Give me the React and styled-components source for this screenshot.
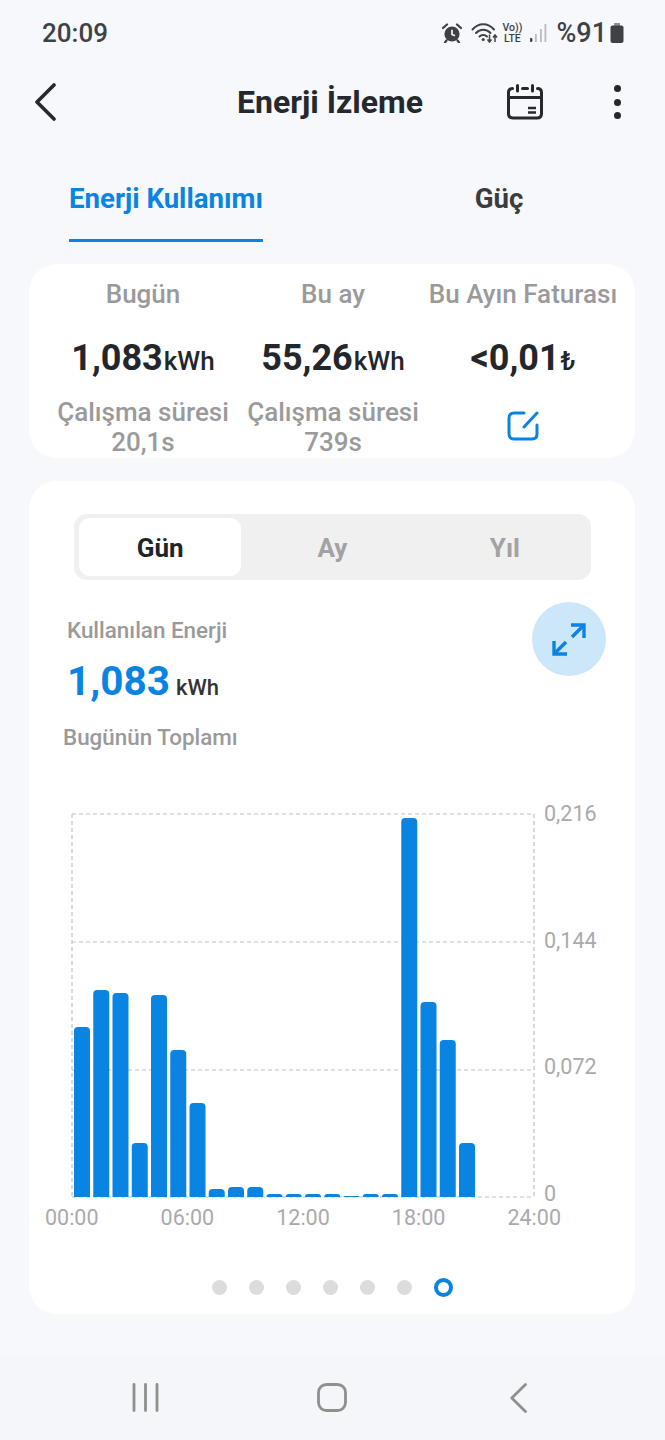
import React from 'react';
import styled, { createGlobalStyle } from 'styled-components';

const BLUE = '#0984e3';
const GREY = '#9a9a9c';

const GlobalStyle = createGlobalStyle`
    * {
        box-sizing: border-box;
    }
    html,
    body {
        margin: 0;
        padding: 0;
        background: #f6f8fc;
    }
    body {
        font-family: Roboto, 'Noto Sans', sans-serif;
    }
`;

// bar tops in page pixels, one per hour, baseline at 1197
const BAR_TOPS = [
    1027, 990, 993, 1143, 995, 1050, 1103, 1189, 1187, 1187, 1194, 1194, 1194, 1194, 1196, 1194, 1194, 818, 1002,
    1040, 1143,
];
const PLOT_TOP = 814;
const PLOT_BOTTOM = 1197;

function Chart() {
    const height = PLOT_BOTTOM - PLOT_TOP;
    return (
        <svg width="464" height={height + 2} viewBox={`-1 -1 464 ${height + 2}`}>
            <g stroke="#c2c2c4" strokeWidth="1.2" strokeDasharray="4 3" fill="none">
                <path d={`M0 0V${height}`} />
                <path d={`M462 0V${height}`} />
                <path d="M0 0H462" />
                <path d="M0 128H462" />
                <path d="M0 256H462" />
                <path d={`M0 ${height}H462`} />
            </g>
            <g fill={BLUE}>
                {BAR_TOPS.map((top, i) => {
                    const x = 2 + i * 19.25;
                    const y = top - PLOT_TOP;
                    const r = Math.min(4, height - y);
                    return (
                        <path
                            key={i}
                            d={`M${x} ${height}V${y + r}Q${x} ${y} ${x + r} ${y}H${x + 16 - r}Q${x + 16} ${y} ${x + 16} ${y + r}V${height}Z`}
                        />
                    );
                })}
            </g>
        </svg>
    );
}

export default function App() {
    return (
        <Page>
            <GlobalStyle />
            <StatusBar>
                <Clock>20:09</Clock>
                <StatusIcons>
                    <svg width="20" height="20" viewBox="0 0 20 20">
                        <circle cx="10" cy="11" r="7.6" fill="#3f4245" />
                        <path d="M10 6.8V11.4L13 12.8" stroke="#f6f8fc" strokeWidth="1.7" fill="none" />
                        <path d="M1 5L5 1.5M19 5L15 1.5" stroke="#3f4245" strokeWidth="2.2" strokeLinecap="round" />
                        <path d="M4.5 17.5L3 19.5M15.5 17.5L17 19.5" stroke="#3f4245" strokeWidth="2.2" strokeLinecap="round" />
                    </svg>
                    <WifiIcon width="27" height="21" viewBox="0 0 27 21">
                        <g fill="none" stroke="#3f4245" strokeWidth="2" strokeLinecap="round">
                            <path d="M1.5 7.5C7.5 .5 17 .5 23 7.5" />
                            <path d="M5 11C9 6.5 15.5 6.5 19.5 11" />
                            <path d="M8.5 14.5C10.5 12.5 14 12.5 16 14.5" />
                        </g>
                        <circle cx="12.2" cy="17.5" r="1.6" fill="#3f4245" />
                        <path d="M18.5 12.5V19.5M16.5 17.5L18.5 20L20.5 17.5M24 20V13M22 15.5L24 13L26 15.5" fill="none" stroke="#3f4245" strokeWidth="1.5" />
                    </WifiIcon>
                    <Volte>
                        <span>Vo))</span>
                        <span>LTE</span>
                    </Volte>
                    <svg width="18" height="20" viewBox="0 0 18 20">
                        <rect x="1" y="15" width="2.4" height="4" rx="1" fill="#3f4245" />
                        <rect x="6" y="11" width="1.8" height="8" fill="#b9bbbe" />
                        <rect x="11" y="6" width="1.8" height="13" fill="#b9bbbe" />
                        <rect x="15.5" y="1" width="1.8" height="18" fill="#b9bbbe" />
                    </svg>
                    <Battery>%91</Battery>
                    <svg width="14" height="20" viewBox="0 0 14 20">
                        <rect x="4" y="0" width="6" height="3" fill="#8d8f92" />
                        <rect x="0.5" y="2.5" width="13" height="17.5" rx="2" fill="#3f4245" />
                    </svg>
                </StatusIcons>
            </StatusBar>

            <Header>
                <svg width="24" height="38" viewBox="0 0 24 38">
                    <path d="M21 2L4 19L21 36" fill="none" stroke="#25292d" strokeWidth="3.6" strokeLinecap="round" strokeLinejoin="round" />
                </svg>
                <Title>Enerji İzleme</Title>
                <HeaderActions>
                    <svg width="36" height="36" viewBox="0 0 36 36">
                        <g fill="none" stroke="#25292d" strokeWidth="3" strokeLinecap="round">
                            <path d="M5.5 4.5C3 4.5 1.5 6 1.5 8.5V29.5C1.5 32.5 3 34 6 34H30C33 34 34.5 32.5 34.5 29.5V8.5C34.5 6 33 4.5 30.5 4.5" />
                            <path d="M1.5 13.5H34.5" />
                            <path d="M10.5 1.5V7M25.5 1.5V7" />
                            <path d="M15.5 4.5H20.5" />
                            <path d="M21 24H29M21 28.5H29" strokeWidth="2.6" strokeLinecap="butt" />
                        </g>
                    </svg>
                    <Kebab>
                        <i />
                        <i />
                        <i />
                    </Kebab>
                </HeaderActions>
            </Header>

            <Tabs>
                <Tab $active>Enerji Kullanımı</Tab>
                <Tab>Güç</Tab>
            </Tabs>

            <SummaryCard>
                <SummaryCol>
                    <SummaryLabel>Bugün</SummaryLabel>
                    <SummaryValue>
                        1,083<small>kWh</small>
                    </SummaryValue>
                    <SummaryNote>
                        Çalışma süresi
                        <br />
                        20,1s
                    </SummaryNote>
                </SummaryCol>
                <SummaryCol>
                    <SummaryLabel>Bu ay</SummaryLabel>
                    <SummaryValue>
                        55,26<small>kWh</small>
                    </SummaryValue>
                    <SummaryNote>
                        Çalışma süresi
                        <br />
                        739s
                    </SummaryNote>
                </SummaryCol>
                <SummaryCol>
                    <SummaryLabel>Bu Ayın Faturası</SummaryLabel>
                    <SummaryValue>
                        &lt;0,01<small>₺</small>
                    </SummaryValue>
                    <EditIcon width="32" height="30" viewBox="0 0 32 30">
                        <path
                            d="M17 2H7C3.7 2 2 3.7 2 7V23C2 26.3 3.7 28 7 28H25C28.3 28 30 26.3 30 23V14"
                            fill="none"
                            stroke={BLUE}
                            strokeWidth="3"
                            strokeLinecap="round"
                        />
                        <path d="M30 2L17 16" fill="none" stroke={BLUE} strokeWidth="3" strokeLinecap="round" />
                    </EditIcon>
                </SummaryCol>
            </SummaryCard>

            <ChartCard>
                <Segments>
                    <Segment $active>Gün</Segment>
                    <Segment>Ay</Segment>
                    <Segment>Yıl</Segment>
                </Segments>

                <EnergyRow>
                    <div>
                        <EnergyLabel>Kullanılan Enerji</EnergyLabel>
                        <EnergyValue>
                            1,083<small>kWh</small>
                        </EnergyValue>
                    </div>
                    <ExpandButton>
                        <svg width="36" height="35" viewBox="0 0 36 35">
                            <g fill="none" stroke={BLUE} strokeWidth="3.4">
                                <path d="M20 3H33V16" />
                                <path d="M33 3L21 15" />
                                <path d="M3 19V32H16" />
                                <path d="M3 32L15 20" />
                            </g>
                        </svg>
                    </ExpandButton>
                </EnergyRow>
                <TotalLabel>Bugünün Toplamı</TotalLabel>

                <PlotRow>
                    <Chart />
                    <YAxis>
                        <span>0,216</span>
                        <span>0,144</span>
                        <span>0,072</span>
                        <span>0</span>
                    </YAxis>
                </PlotRow>
                <XAxis>
                    <span>00:00</span>
                    <span>06:00</span>
                    <span>12:00</span>
                    <span>18:00</span>
                    <span>24:00</span>
                </XAxis>

                <Dots>
                    {[0, 1, 2, 3, 4, 5, 6].map((i) => (
                        <Dot key={i} $active={i === 6} />
                    ))}
                </Dots>
            </ChartCard>

            <NavBar>
                <svg width="27" height="29" viewBox="0 0 27 29">
                    <path d="M2 1.5V27.5M13.5 1.5V27.5M25 1.5V27.5" stroke="#8f8f8f" strokeWidth="2.8" strokeLinecap="round" />
                </svg>
                <svg width="30" height="29" viewBox="0 0 30 29">
                    <rect x="1.5" y="1.5" width="27" height="26" rx="8" fill="none" stroke="#8f8f8f" strokeWidth="2.8" />
                </svg>
                <svg width="17" height="30" viewBox="0 0 17 30">
                    <path d="M15.5 1.5L1.8 15L15.5 28.5" fill="none" stroke="#8f8f8f" strokeWidth="2.8" strokeLinecap="round" strokeLinejoin="round" />
                </svg>
            </NavBar>
        </Page>
    );
}

const Page = styled.div`
    width: 665px;
    height: 1440px;
    overflow: hidden;
    display: flex;
    flex-direction: column;
    background: #f6f8fc;
`;

const StatusBar = styled.div`
    height: 65px;
    padding: 0 41px 0 42px;
    display: flex;
    align-items: center;
    justify-content: space-between;
`;

const Clock = styled.div`
    font-size: 26px;
    font-weight: 500;
    color: #3f4245;
`;

const StatusIcons = styled.div`
    display: flex;
    align-items: center;
    height: 22px;
    svg {
        flex: none;
    }
`;

const WifiIcon = styled.svg`
    margin-left: 9px;
`;

const Volte = styled.div`
    width: 20px;
    margin: 0 7px 0 4px;
    display: flex;
    flex-direction: column;
    align-items: center;
    font-size: 10.5px;
    line-height: 11px;
    font-weight: 500;
    color: #3f4245;
    span {
        white-space: nowrap;
    }
`;

const Battery = styled.div`
    margin: 0 3px 0 9px;
    font-size: 27px;
    font-weight: 500;
    color: #3f4245;
`;

const Header = styled.div`
    height: 74px;
    padding: 0 42px 0 33px;
    display: grid;
    grid-template-columns: 200px 1fr 200px;
    align-items: center;
`;

const Title = styled.div`
    padding-left: 4px;
    text-align: center;
    font-size: 32px;
    font-weight: 700;
    color: #25292d;
    white-space: nowrap;
`;

const HeaderActions = styled.div`
    display: flex;
    align-items: center;
    justify-content: flex-end;
    gap: 68px;
`;

const Kebab = styled.div`
    width: 12px;
    display: flex;
    flex-direction: column;
    align-items: center;
    gap: 6.5px;
    i {
        width: 7px;
        height: 7px;
        border-radius: 50%;
        background: #25292d;
    }
`;

const Tabs = styled.div`
    margin-top: 16px;
    padding-left: 69px;
    display: flex;
    gap: 139px;
`;

const Tab = styled.div`
    width: 194px;
    height: 87px;
    padding-top: 3px;
    display: flex;
    align-items: center;
    justify-content: center;
    font-size: 27.6px;
    font-weight: 700;
    white-space: nowrap;
    color: ${(p) => (p.$active ? BLUE : '#3a3d40')};
    border-bottom: 3px solid ${(p) => (p.$active ? BLUE : 'transparent')};
`;

const SummaryCard = styled.div`
    margin: 22px 30px 0 29px;
    height: 194px;
    padding: 0 17px 0 19px;
    display: grid;
    grid-template-columns: repeat(3, 190px);
    background: #fff;
    border-radius: 28px;
    overflow: hidden;
`;

const SummaryCol = styled.div`
    display: flex;
    flex-direction: column;
    align-items: center;
    text-align: center;
`;

const SummaryLabel = styled.div`
    margin-top: 14px;
    height: 32px;
    line-height: 32px;
    font-size: 26px;
    font-weight: 500;
    color: ${GREY};
    white-space: nowrap;
`;

const SummaryValue = styled.div`
    margin-top: 26px;
    height: 44px;
    line-height: 44px;
    font-size: 36px;
    font-weight: 700;
    color: #23272b;
    white-space: nowrap;
    small {
        margin-left: 1px;
        font-size: 26px;
        font-weight: 500;
    }
`;

const SummaryNote = styled.div`
    margin-top: 17px;
    font-size: 26px;
    line-height: 30px;
    font-weight: 500;
    color: ${GREY};
    white-space: nowrap;
`;

const EditIcon = styled.svg`
    margin-top: 31px;
`;

const ChartCard = styled.div`
    margin: 23px 30px 0 29px;
    height: 833px;
    padding-top: 33px;
    background: #fff;
    border-radius: 28px;
`;

const Segments = styled.div`
    margin-left: 45px;
    width: 517px;
    height: 66px;
    display: grid;
    grid-template-columns: repeat(3, 1fr);
    background: #f0f0f1;
    border-radius: 13px;
`;

const Segment = styled.div`
    margin: 4px 5px;
    padding-top: 1px;
    display: flex;
    align-items: center;
    justify-content: center;
    font-size: 26px;
    font-weight: 700;
    border-radius: 11px;
    color: ${(p) => (p.$active ? '#202428' : '#a2a2a4')};
    background: ${(p) => (p.$active ? '#fff' : 'transparent')};
`;

const EnergyRow = styled.div`
    margin-top: 22px;
    padding: 0 29px 0 38px;
    display: flex;
    justify-content: space-between;
    align-items: flex-start;
`;

const EnergyLabel = styled.div`
    margin-top: 16px;
    font-size: 22.4px;
    line-height: 24px;
    font-weight: 500;
    color: ${GREY};
`;

const EnergyValue = styled.div`
    margin-top: 13px;
    height: 52px;
    line-height: 52px;
    font-size: 40.5px;
    font-weight: 700;
    color: ${BLUE};
    small {
        margin-left: 6px;
        font-size: 22px;
        font-weight: 500;
        color: #333;
    }
`;

const ExpandButton = styled.div`
    width: 74px;
    height: 74px;
    display: flex;
    align-items: center;
    justify-content: center;
    border-radius: 50%;
    background: #cce6fa;
`;

const TotalLabel = styled.div`
    margin-top: 17px;
    padding-left: 34px;
    font-size: 22.4px;
    line-height: 26px;
    font-weight: 500;
    color: ${GREY};
`;

const PlotRow = styled.div`
    margin-top: 63px;
    padding-left: 42px;
    display: flex;
`;

const YAxis = styled.div`
    margin: -9px 0 -6px 9px;
    display: flex;
    flex-direction: column;
    justify-content: space-between;
    font-size: 21.5px;
    line-height: 20px;
    color: #aaaaac;
`;

const XAxis = styled.div`
    margin: 10px 0 0 16px;
    width: 516px;
    display: flex;
    justify-content: space-between;
    font-size: 21.5px;
    line-height: 20px;
    color: #aaaaac;
`;

const Dots = styled.div`
    margin-top: 49px;
    height: 20px;
    display: flex;
    align-items: center;
    justify-content: center;
    gap: 22px;
`;

const Dot = styled.div`
    width: ${(p) => (p.$active ? '19px' : '15px')};
    height: ${(p) => (p.$active ? '19px' : '15px')};
    border-radius: 50%;
    background: ${(p) => (p.$active ? '#fff' : '#dcdcdc')};
    border: ${(p) => (p.$active ? `4px solid ${BLUE}` : 'none')};
`;

const NavBar = styled.div`
    margin-top: 41px;
    flex: 1;
    padding: 28px 0 0 132px;
    display: grid;
    grid-template-columns: 185px 193px auto;
    align-items: start;
    background: #f5f6f9;
`;
